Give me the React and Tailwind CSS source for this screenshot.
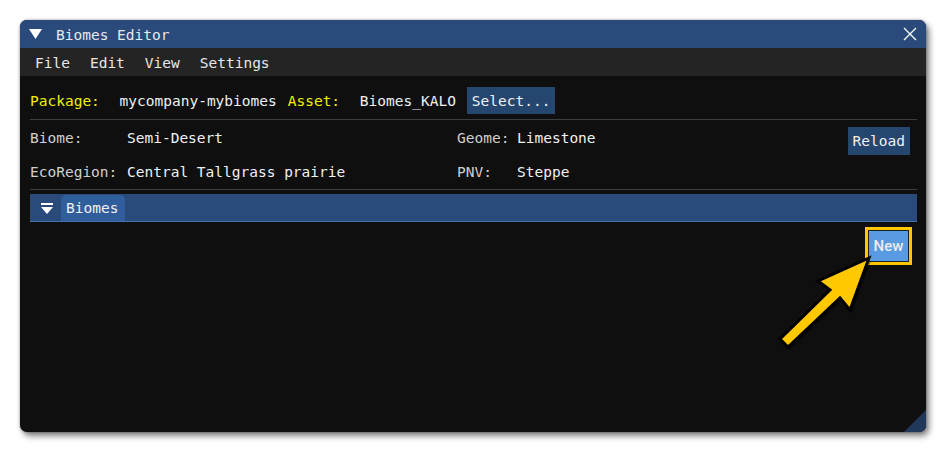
import React from "react";

const mono = { fontFamily: '"DejaVu Sans Mono", monospace' };

function Sep() {
  return <div className="h-px bg-[#3d3d44]" />;
}

export default function App() {
  return (
    <div className="relative w-[947px] h-[453px] bg-white pt-[20px] pl-[20px] overflow-hidden" style={mono}>
      <div className="relative w-[906px] h-[412px] rounded-[7px] overflow-hidden bg-[#0f0f0f] shadow-[0_0_3px_rgba(0,0,0,0.35),3px_4px_6px_rgba(0,0,0,0.5)] text-[14.5px] leading-[18px]">
        {/* Title bar */}
        <div className="h-[28px] bg-[#294a7a] flex items-center pl-[9px] pr-[9px]">
          <svg width="13" height="10" viewBox="0 0 13 10" className="shrink-0">
            <polygon points="0,0 13,0 6.5,10" fill="#ffffff" />
          </svg>
          <span className="ml-[14px] pt-[1px] text-[#e8e8e8]">Biomes Editor</span>
          <svg width="14" height="14" viewBox="0 0 14 14" className="ml-auto">
            <path d="M1 1 L13 13 M13 1 L1 13" stroke="#ffffff" strokeWidth="1.3" />
          </svg>
        </div>
        {/* Menu bar */}
        <div className="h-[28px] bg-[#242424] flex items-center pl-[15px] pt-[1px] gap-[20px] text-[#e8e8e8]">
          <span>File</span>
          <span>Edit</span>
          <span>View</span>
          <span>Settings</span>
        </div>
        {/* Content */}
        <div className="pl-[10px] pr-[9px]">
          <div className="mt-[11px] h-[27px] flex items-center gap-[11px]">
            <span className="text-[#f0f000] whitespace-pre">Package: </span>
            <span className="text-[#f0f0f0]">mycompany-mybiomes</span>
            <span className="text-[#f0f000] whitespace-pre">Asset: </span>
            <span className="text-[#f0f0f0]">Biomes_KALO</span>
            <span className="h-[27px] px-[5px] flex items-center bg-[#25466f] text-[#f0f0f0]">Select...</span>
          </div>
          <div className="mt-[5px]">
            <Sep />
          </div>
          <div className="h-[34px] flex items-start">
            <span className="w-[97px] pt-[9px] text-[#cfcfcf]">Biome:</span>
            <span className="w-[330px] pt-[9px] text-[#f0f0f0]">Semi-Desert</span>
            <span className="w-[60px] pt-[9px] text-[#cfcfcf]">Geome:</span>
            <span className="pt-[9px] text-[#f0f0f0]">Limestone</span>
            <span className="ml-auto mr-[7px] mt-[7px] h-[28px] px-[5px] flex items-center bg-[#25466f] text-[#f0f0f0]">Reload</span>
          </div>
          <div className="h-[35px] flex items-start">
            <span className="w-[97px] pt-[9px] text-[#cfcfcf]">EcoRegion:</span>
            <span className="w-[330px] pt-[9px] text-[#f0f0f0]">Central Tallgrass prairie</span>
            <span className="w-[60px] pt-[9px] text-[#cfcfcf]">PNV:</span>
            <span className="pt-[9px] text-[#f0f0f0]">Steppe</span>
          </div>
          <Sep />
          {/* Header bar */}
          <div className="mt-[4px] h-[28px] bg-[#294a7a] border-b border-[#4272b4] flex items-end">
            <div className="w-[31px] h-full flex flex-col items-center justify-center pl-[2px] pt-[1px]">
              <div className="w-[12px] h-[2px] bg-white" />
              <svg width="12" height="7" viewBox="0 0 12 7" className="mt-[2px]">
                <polygon points="0,0 12,0 6,7" fill="#ffffff" />
              </svg>
            </div>
            <div className="h-[26px] w-[64px] rounded-t-[5px] bg-[#305d9c] pl-[5px] flex items-center text-[#f0f0f0]">
              Biomes
            </div>
          </div>
          {/* New button */}
          <div className="mt-[5px] flex justify-end pr-[5px]">
            <div className="border-[3px] border-[#ffc800] bg-[#202020] p-[1px]">
              <div
                className="w-[39px] h-[30px] bg-[#599be2] flex items-center justify-center text-[15px] font-medium text-[#ececec]"
                style={{ fontFamily: 'Roboto, "Noto Sans", sans-serif' }}
              >
                New
              </div>
            </div>
          </div>
        </div>
        {/* Resize grip */}
        <svg width="22" height="22" viewBox="0 0 22 22" className="absolute right-0 bottom-0">
          <polygon points="22,0 22,22 0,22" fill="#20385a" />
        </svg>
      </div>
      {/* Arrow annotation */}
      <svg width="947" height="453" viewBox="0 0 947 453" className="absolute left-0 top-0 pointer-events-none">
        <polygon
          points="869,258 850,310 840,298 788,347 780,339 830,290 818,281"
          fill="rgba(0,0,0,0.35)"
          transform="translate(2,3)"
        />
        <polygon
          points="869,258 850,310 840,298 788,347 780,339 830,290 818,281"
          fill="#ffc800"
          stroke="#000000"
          strokeWidth="3"
          strokeLinejoin="miter"
        />
      </svg>
    </div>
  );
}
